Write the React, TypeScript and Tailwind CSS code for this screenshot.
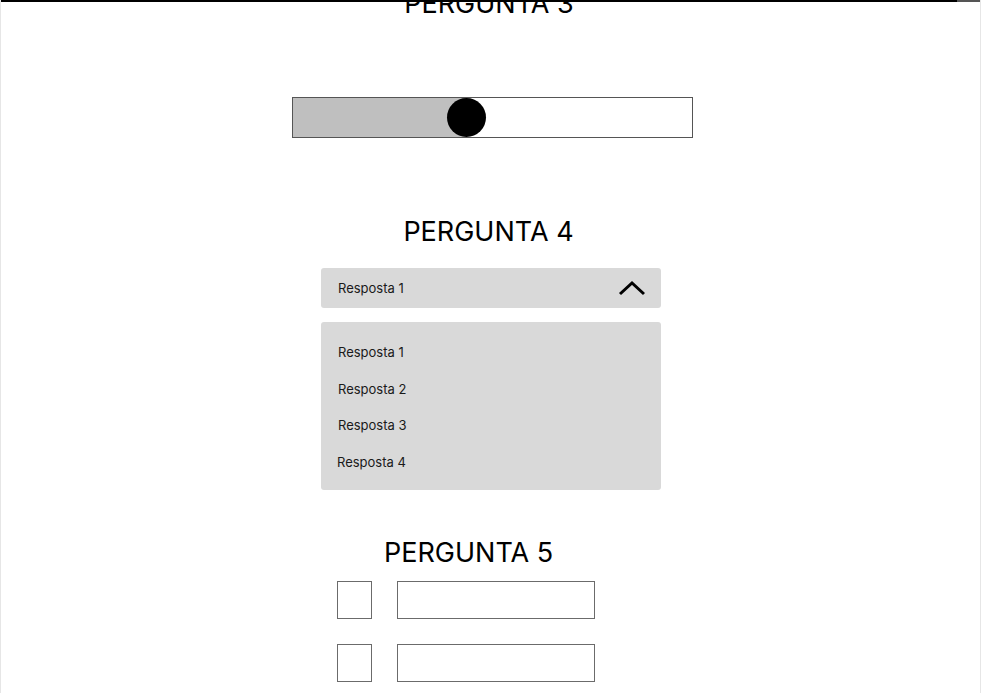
import React from "react";

export default function App() {
  const items = ["Resposta 1", "Resposta 2", "Resposta 3", "Resposta 4"];
  return (
    <div
      className="relative w-[981px] h-[693px] overflow-hidden bg-white border-l border-r border-[#e6e6e6] text-black"
      style={{ fontFamily: "Inter, 'Noto Sans', sans-serif" }}
    >
      <div className="absolute top-0 left-0 right-0 z-10 flex h-[2px]">
        <div className="w-[956px] h-[2px] bg-black" />
        <div className="flex-1 h-[2px] bg-[#555555]" />
      </div>

      <div className="flex flex-col">
        <h2 className="mt-[-9px] pr-[3px] text-center text-[27px] leading-[26px] font-normal">
          PERGUNTA 3
        </h2>

        <div className="mt-[80px] ml-[291px] relative w-[401px] h-[41px] border border-[#555555] bg-white">
          <div className="h-full w-[173px] bg-[#bfbfbf]" />
          <div className="absolute left-[154px] top-0 w-[39px] h-[39px] rounded-full bg-black" />
        </div>

        <h2 className="mt-[81px] pr-[4px] text-center text-[27px] leading-[26px] font-normal">
          PERGUNTA 4
        </h2>

        <div className="mt-[23px] ml-[320px] w-[340px] h-[40px] rounded-[3px] bg-[#d9d9d9] flex items-center justify-between pl-[17px] pr-[15px]">
          <span className="text-[13px] leading-[16px] text-[#1a1a1a]">Resposta 1</span>
          <svg width="28" height="16" viewBox="0 0 28 16">
            <polyline
              points="2,14 14,3 26,14"
              fill="none"
              stroke="black"
              strokeWidth="3"
            />
          </svg>
        </div>

        <div className="mt-[14px] ml-[320px] w-[340px] h-[168px] rounded-[3px] bg-[#d9d9d9] flex flex-col gap-[20.67px] pt-[22px] pl-[17px]">
          {items.map((t, i) => (
            <span
              key={t}
              className={`text-[13px] leading-[16px] text-[#1a1a1a] ${i === 3 ? "ml-[-1px]" : ""}`}
            >
              {t}
            </span>
          ))}
        </div>

        <h2 className="mt-[50px] ml-[383px] text-[27px] leading-[26px] font-normal">
          PERGUNTA 5
        </h2>

        <div className="mt-[15px] ml-[336px] flex gap-[25px]">
          <div className="w-[35px] h-[38px] border border-[#6b6b6b]" />
          <div className="w-[198px] h-[38px] border border-[#6b6b6b]" />
        </div>
        <div className="mt-[25px] ml-[336px] flex gap-[25px]">
          <div className="w-[35px] h-[38px] border border-[#6b6b6b]" />
          <div className="w-[198px] h-[38px] border border-[#6b6b6b]" />
        </div>
      </div>
    </div>
  );
}
